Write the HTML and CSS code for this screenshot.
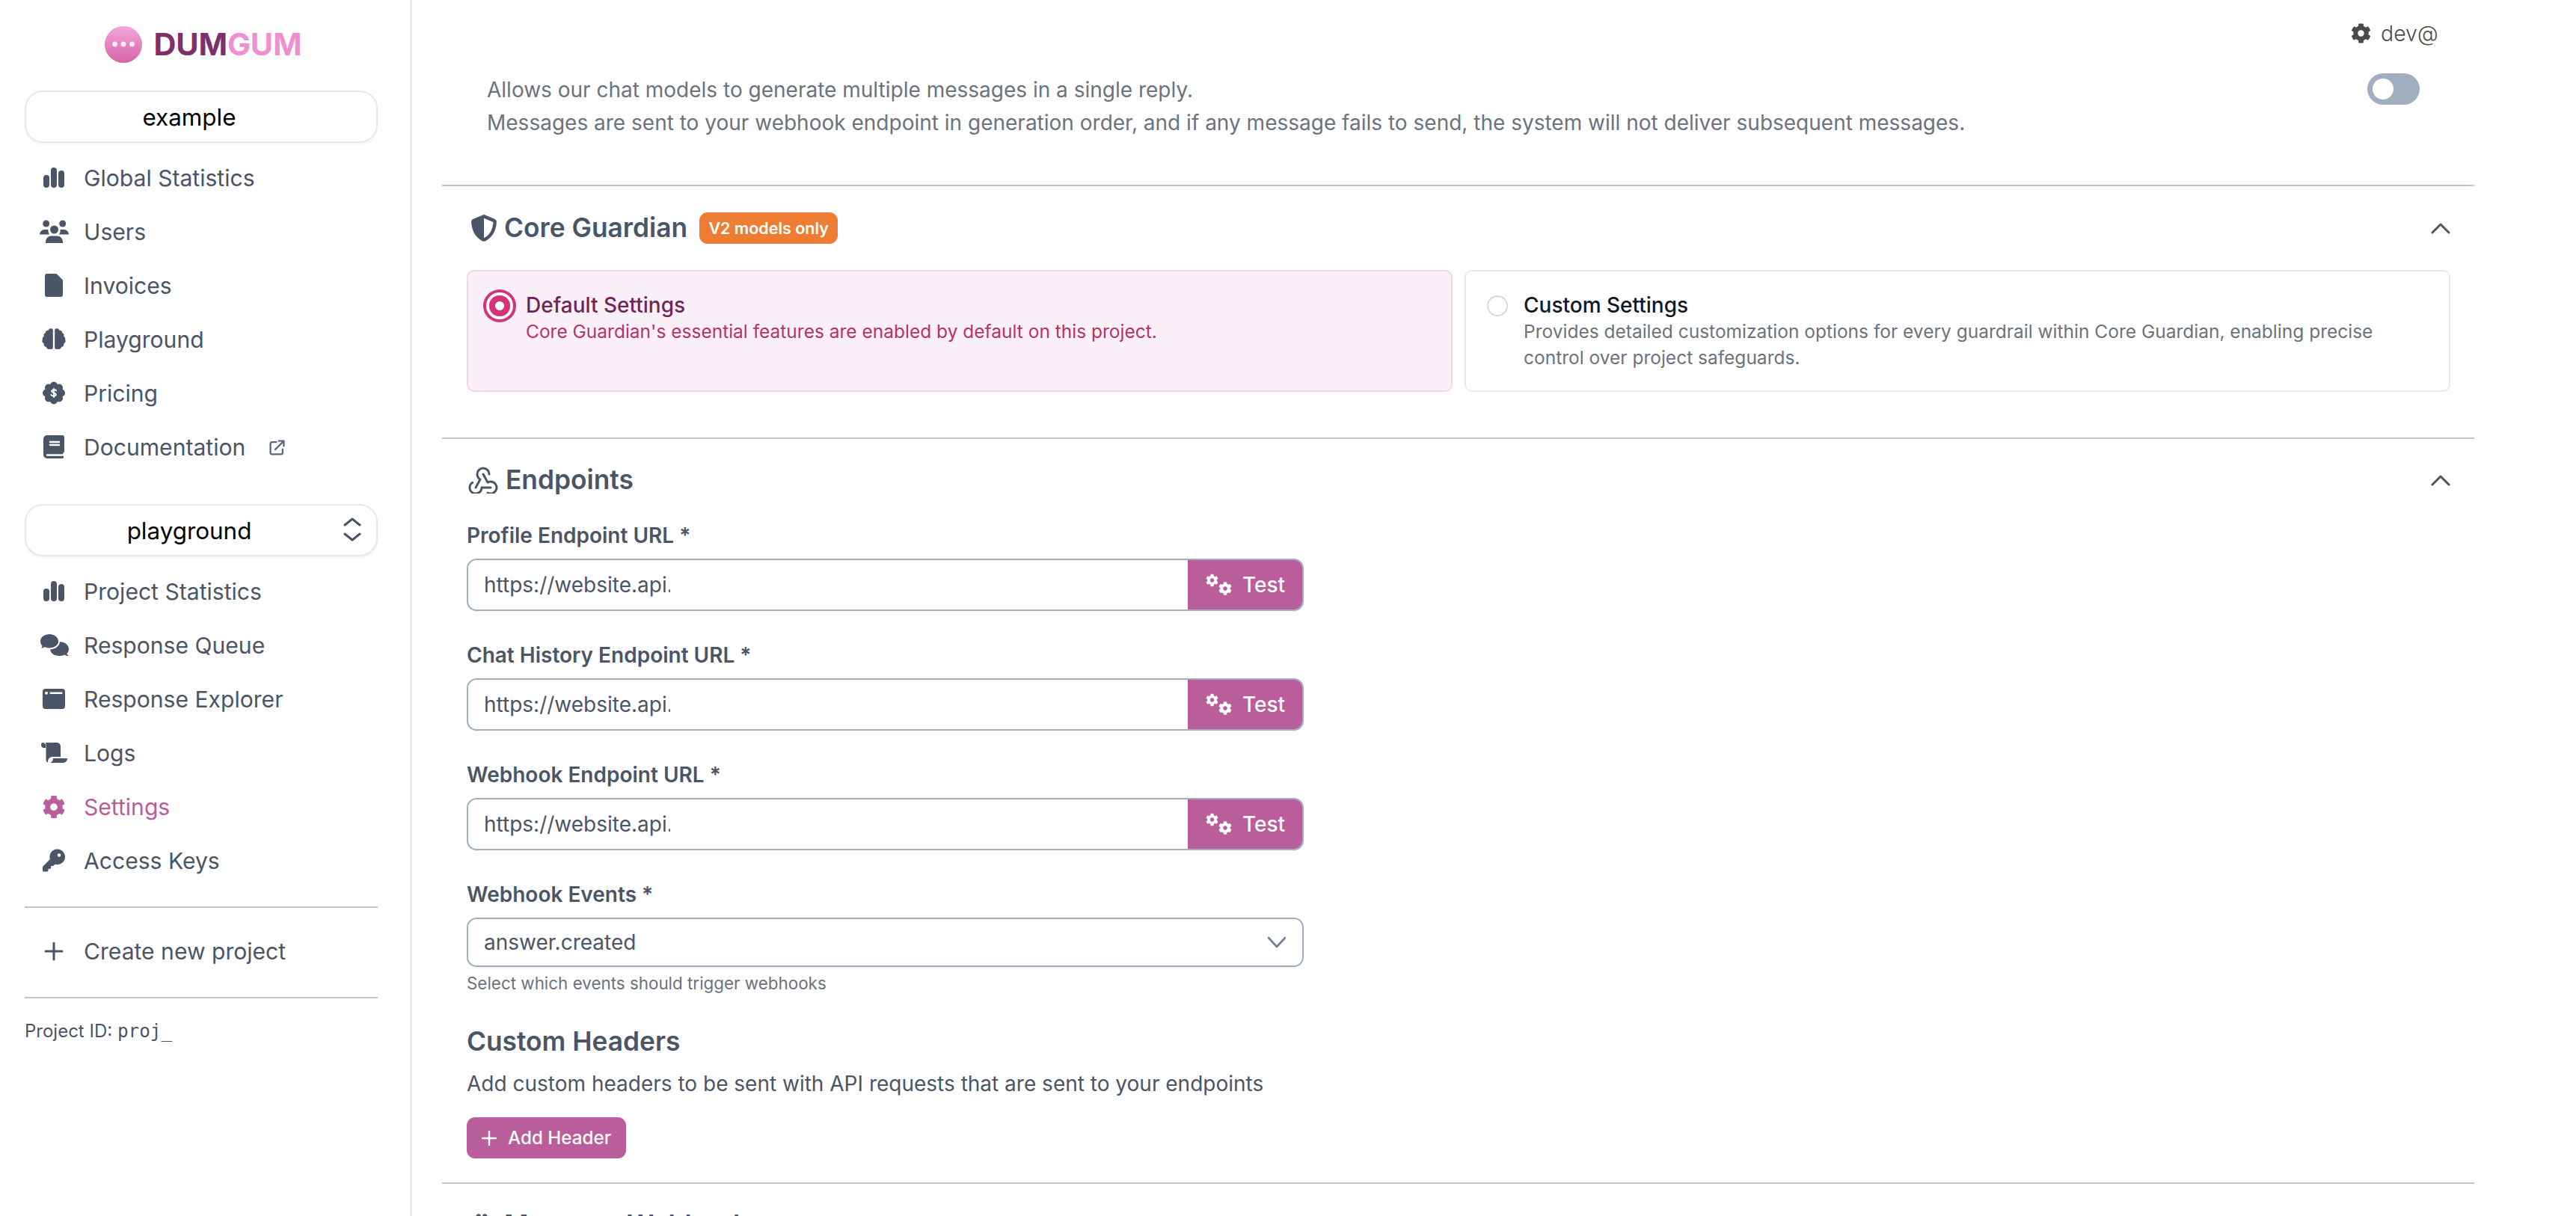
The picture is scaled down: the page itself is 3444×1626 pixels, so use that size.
FILE: index.html
```html
<!DOCTYPE html>
<html lang="en">
<head>
<meta charset="utf-8">
<title>DumGum Settings</title>
<link rel="stylesheet" href="styles.css">
</head>
<body>
<svg class="defs" width="0" height="0" aria-hidden="true">
  <symbol id="i-chart" viewBox="0 0 40 32"><rect x="6" y="12" width="8" height="17" rx="4"/><rect x="16" y="2" width="8" height="27" rx="4"/><rect x="26" y="6" width="8" height="23" rx="4"/></symbol>
  <symbol id="i-gear" viewBox="0 0 512 512"><path d="M487.4 315.7l-42.6-24.6c4.3-23.2 4.3-47 0-70.2l42.6-24.6c4.9-2.8 7.1-8.6 5.5-14-11.1-35.6-30-67.8-54.7-94.6-3.8-4.1-10-5.1-14.8-2.3L380.8 110c-17.9-15.4-38.5-27.3-60.8-35.1V25.8c0-5.6-3.9-10.5-9.4-11.7-36.7-8.2-74.3-7.8-109.2 0-5.5 1.2-9.4 6.1-9.4 11.7V75c-22.2 7.9-42.8 19.8-60.8 35.1L88.7 85.5c-4.9-2.8-11-1.9-14.8 2.3-24.7 26.7-43.6 58.9-54.7 94.6-1.7 5.4.6 11.2 5.5 14L67.3 221c-4.3 23.2-4.3 47 0 70.2l-42.6 24.6c-4.9 2.8-7.1 8.6-5.5 14 11.1 35.6 30 67.8 54.7 94.6 3.8 4.1 10 5.1 14.8 2.3l42.6-24.6c17.9 15.4 38.5 27.3 60.8 35.1v49.2c0 5.6 3.9 10.5 9.4 11.7 36.7 8.2 74.3 7.8 109.2 0 5.5-1.2 9.4-6.1 9.4-11.7v-49.2c22.2-7.9 42.8-19.8 60.8-35.1l42.6 24.6c4.9 2.8 11 1.9 14.8-2.3 24.7-26.7 43.6-58.9 54.7-94.6 1.5-5.5-.7-11.3-5.6-14.1zM256 336c-44.1 0-80-35.9-80-80s35.9-80 80-80 80 35.9 80 80-35.9 80-80 80z"/></symbol>
  <symbol id="i-gears" viewBox="0 0 36 30"><use href="#i-gear" x="1" y="0" width="17" height="18"/><use href="#i-gear" x="18" y="11" width="18" height="18"/></symbol>
  <symbol id="i-key" viewBox="0 0 512 512"><path d="M336 352c97.200 0 176-78.800 176-176S433.200 0 336 0S160 78.800 160 176c0 18.700 2.900 36.800 8.300 53.700L7 391c-4.500 4.500-7 10.600-7 17v80c0 13.300 10.700 24 24 24h80c13.300 0 24-10.700 24-24V448h40c13.300 0 24-10.700 24-24V384h40c6.400 0 12.500-2.500 17-7l33.300-33.300c16.900 5.400 35 8.300 53.700 8.300zM376 96a40 40 0 1 1 0 80 40 40 0 1 1 0-80z"/></symbol>
  <symbol id="i-up" viewBox="0 0 26 16"><path d="M2 14L13 3L24 14" fill="none" stroke="#4a5568" stroke-width="3" stroke-linecap="round" stroke-linejoin="round"/></symbol>
  <symbol id="i-brain" viewBox="0 0 40 32"><g transform="translate(0 1.800) scale(1 .9)"><path d="M18.800 3a3 3 0 0 0-6-1a4 4 0 0 0-4 4a4 4 0 0 0-2 5a5 5 0 0 0-2 5a5 5 0 0 0 2 6a4 4 0 0 0 3 5a4 4 0 0 0 5 3a3 3 0 0 0 4-2z"/><path d="M21.200 3a3 3 0 0 1 6-1a4 4 0 0 1 4 4a4 4 0 0 1 2 5a5 5 0 0 1 2 5a5 5 0 0 1-2 6a4 4 0 0 1-3 5a4 4 0 0 1-5 3a3 3 0 0 1-4-2z"/></g></symbol>
</svg>

<div class="app">
  <aside class="sidebar">
    <div class="logo">
      <svg class="logo-mark" viewBox="0 0 50 49">
        <defs><linearGradient id="logo-g" x1="0" y1="0" x2="0" y2="1"><stop offset="0" stop-color="#f3a6d8"/><stop offset="1" stop-color="#d763a8"/></linearGradient></defs>
        <ellipse cx="25" cy="24.500" rx="25" ry="24.500" fill="url(#logo-g)"/>
        <circle cx="13.500" cy="24" r="3.500" fill="#fbe6f4"/><circle cx="25" cy="24" r="3.500" fill="#fbe6f4"/><circle cx="36.500" cy="24" r="3.500" fill="#fbe6f4"/>
      </svg>
      <span class="logo-text"><span class="logo-dark">DUM</span><span class="logo-light">GUM</span></span>
    </div>

    <div class="picker">example</div>
    <nav class="nav">
      <a class="nav-item"><svg class="nav-icon"><use href="#i-chart"/></svg>Global Statistics</a>
      <a class="nav-item"><svg class="nav-icon" viewBox="0 0 40 32"><circle cx="9.700" cy="5" r="4.500"/><circle cx="31.700" cy="5" r="4.500"/><circle cx="20.500" cy="13" r="5.500"/><path d="M9 31v-2a7.500 7.500 0 0 1 7.500-7.500h8a7.500 7.500 0 0 1 7.500 7.500v2z"/><path d="M1 19.500a6.500 6.500 0 0 1 6.500-6.500h5a8 8 0 0 0 1.500 6.500z"/><path d="M40 19.500a6.500 6.500 0 0 0-6.500-6.500h-5a8 8 0 0 1-1.500 6.500z"/></svg>Users</a>
      <a class="nav-item"><svg class="nav-icon" viewBox="0 0 40 32"><path d="M11 0H23.500L32 8.500V28a3 3 0 0 1-3 3H11a3 3 0 0 1-3-3V3a3 3 0 0 1 3-3z"/></svg>Invoices</a>
      <a class="nav-item"><svg class="nav-icon"><use href="#i-brain"/></svg>Playground</a>
      <a class="nav-item"><svg class="nav-icon" viewBox="0 0 40 32"><circle cx="20" cy="15.500" r="12"/><circle cx="20" cy="5.500" r="5"/><circle cx="27" cy="8.500" r="5"/><circle cx="30" cy="15.500" r="5"/><circle cx="27" cy="22.500" r="5"/><circle cx="20" cy="25.500" r="5"/><circle cx="13" cy="22.500" r="5"/><circle cx="10" cy="15.500" r="5"/><circle cx="13" cy="8.500" r="5"/><path class="icon-cut" transform="translate(20 15.500) scale(.8) translate(-20 -15.500)" d="M24 11.500c-1-1.500-6.500-2-7.500.5c-1 3 7.500 3 7 6.500c-.5 2.500-6.500 2.500-8 0M20 8.500v14"/></svg>Pricing</a>
      <a class="nav-item"><svg class="nav-icon" viewBox="0 0 40 32"><path d="M11 0H31a3 3 0 0 1 3 3V21a3 3 0 0 1-2 3v3.500a2 2 0 0 1 1 2a1.500 1.500 0 0 1-1.500 1.500H11a5 5 0 0 1-5-5V5a5 5 0 0 1 5-5z"/><path class="icon-cut" d="M15 9H27M15 13H27M11 26.500H31"/></svg>Documentation<svg class="ext-icon" viewBox="0 0 20 20"><path d="M9 3H3.500A2 2 0 0 0 1.500 5V16.500A2 2 0 0 0 3.500 18.500H15A2 2 0 0 0 17 16.500V12M7.500 12.500L18 2M12 1.500H18.500V8"/></svg></a>
    </nav>

    <div class="picker picker-project">playground
      <svg class="picker-arrows" viewBox="0 0 24 32"><path d="M2 10L12 2L22 10M2 22L12 30L22 22"/></svg>
    </div>
    <nav class="nav">
      <a class="nav-item"><svg class="nav-icon"><use href="#i-chart"/></svg>Project Statistics</a>
      <a class="nav-item"><svg class="nav-icon" viewBox="0 0 40 32"><path d="M27 11c7 0 13 4 13 10c0 2.500-1 4.500-2.500 6c.3 1 1.200 2 2.500 3c-2.500 0-4.500-.5-6-1.500c-2 1-4.500 1.500-7 1.500c-7 0-12-4-12-9.500s5-9.500 12-9.500z"/><path class="icon-halo" d="M14 0C6.500 0 1 4.500 1 10.500c0 2.500 1 4.800 2.500 6.500C3 18.500 2 19.800 1 21c2.500 0 5-.7 7-1.800c2 .8 4 1.300 6 1.300c7.500 0 13-4.500 13-10S21.500 0 14 0z"/></svg>Response Queue</a>
      <a class="nav-item"><svg class="nav-icon" viewBox="0 0 40 32"><rect x="5" y="2" width="30" height="27" rx="4"/><circle class="icon-dot" cx="10" cy="7.700" r="2"/><rect class="icon-dot" x="14.500" y="6.500" width="17" height="2.400" rx="1.200"/></svg>Response Explorer</a>
      <a class="nav-item"><svg class="nav-icon" viewBox="0 0 40 32"><path d="M5 2a2.500 2.500 0 0 0-2 2.500c0 3 1.500 4.500 3.500 4.500H9V5.500C9 3.500 7.500 2 5 2z"/><path d="M9 2H24a5 5 0 0 1 5 5V21H18a6 6 0 0 0-6 6v1.500c-2-.5-2.500-2-2.500-4.500V6c0-1.500-.2-3-.5-4z"/><path d="M19 23H38c0 3.500-2.500 6-6 6H15c2.500-1 4-3 4-6z"/></svg>Logs</a>
      <a class="nav-item nav-item-active"><svg class="nav-icon" viewBox="0 0 40 32"><use href="#i-gear" x="4.500" y="0.500" width="31" height="31"/></svg>Settings</a>
      <a class="nav-item"><svg class="nav-icon" viewBox="0 0 40 32"><use href="#i-key" x="5" y="0" width="30" height="31"/></svg>Access Keys</a>
    </nav>

    <hr class="side-rule side-rule-first">
    <a class="nav-item nav-item-create"><svg class="nav-icon plus-icon" viewBox="0 0 40 32"><path d="M20 5V27M9 16H31"/></svg>Create new project</a>
    <hr class="side-rule">
    <p class="project-id">Project ID: <code class="project-code">proj_</code></p>
  </aside>

  <main class="main">
    <div class="user-menu">
      <svg class="user-gear"><use href="#i-gear"/></svg>
      <span class="user-name">dev@example.com</span>
    </div>

    <div class="intro">
      <p class="intro-text">Allows our chat models to generate multiple messages in a single reply.<br>Messages are sent to your webhook endpoint in generation order, and if any message fails to send, the system will not deliver subsequent messages.</p>
      <span class="toggle"><span class="toggle-knob"></span></span>
    </div>

    <section class="section section-guardian">
      <header class="section-head">
        <svg class="section-icon shield-icon" viewBox="0 0 512 512"><path d="M256 0c4.600 0 9.200 1 13.400 2.900L457.700 82.800c22 9.300 38.400 31 38.300 57.200c-.5 99.200-41.300 280.700-213.600 363.200c-16.700 8-36.100 8-52.800 0C57.300 420.700 16.500 239.200 16 140c-.1-26.200 16.300-47.900 38.300-57.200L242.700 2.900C246.800 1 251.400 0 256 0zm0 66.800V444.800C394 378 431.100 230.100 432 141.400L256 66.800l0 0z"/></svg>
        <h2 class="section-title">Core Guardian</h2>
        <span class="badge">V2 models only</span>
        <svg class="collapse"><use href="#i-up"/></svg>
      </header>
      <div class="cards">
        <div class="card card-on">
          <span class="radio radio-on"></span>
          <div class="card-body">
            <div class="card-title">Default Settings</div>
            <div class="card-text">Core Guardian's essential features are enabled by default on this project.</div>
          </div>
        </div>
        <div class="card">
          <span class="radio"></span>
          <div class="card-body">
            <div class="card-title">Custom Settings</div>
            <div class="card-text">Provides detailed customization options for every guardrail within Core Guardian, enabling precise control over project safeguards.</div>
          </div>
        </div>
      </div>
    </section>

    <section class="section">
      <header class="section-head">
        <svg class="section-icon webhook-icon" viewBox="2 3 20 18"><path d="M4.876 13.610a4 4 0 1 0 6.124 3.390h6"/><path d="M15.066 20.502a4 4 0 1 0 1.934-7.502c-.706 0-1.424.179-2 .5l-3-5.500"/><path d="M16 8a4 4 0 1 0-8 0c0 1.506.77 2.818 2 3.500l-3 5.500"/></svg>
        <h2 class="section-title">Endpoints</h2>
        <svg class="collapse"><use href="#i-up"/></svg>
      </header>

      <div class="form">
        <label class="field-label field-label-first">Profile Endpoint URL *</label>
        <div class="url-row">
          <div class="url-value"><span class="url-clip">https://website.api.example.com</span></div>
          <span class="test-btn"><svg class="gears"><use href="#i-gears"/></svg>Test</span>
        </div>
        <label class="field-label">Chat History Endpoint URL *</label>
        <div class="url-row">
          <div class="url-value"><span class="url-clip">https://website.api.example.com</span></div>
          <span class="test-btn"><svg class="gears"><use href="#i-gears"/></svg>Test</span>
        </div>
        <label class="field-label">Webhook Endpoint URL *</label>
        <div class="url-row">
          <div class="url-value"><span class="url-clip">https://website.api.example.com</span></div>
          <span class="test-btn"><svg class="gears"><use href="#i-gears"/></svg>Test</span>
        </div>
        <label class="field-label">Webhook Events *</label>
        <div class="event-select">answer.created
          <svg class="event-chevron" viewBox="0 0 26 16"><path d="M2 2L13 14L24 2"/></svg>
        </div>
        <p class="helper">Select which events should trigger webhooks</p>
        <h3 class="sub-title">Custom Headers</h3>
        <p class="sub-text">Add custom headers to be sent with API requests that are sent to your endpoints</p>
        <span class="add-btn"><svg class="add-plus" viewBox="0 0 20 20"><path d="M10 1V19M1 10H19"/></svg>Add Header</span>
      </div>
    </section>

    <section class="section">
      <header class="section-head">
        <svg class="section-icon"><use href="#i-brain"/></svg>
        <h2 class="section-title">Message Webhook</h2>
      </header>
    </section>
  </main>
</div>
</body>
</html>
```
FILE: styles.css
```css
* { box-sizing: border-box; }
html, body { margin: 0; height: 1626px; overflow: hidden; background: #fff; }
body { font-family: Inter, "Noto Sans", sans-serif; font-size: 28px; color: #4a5568; }
.defs { position: absolute; }
p, h2, h3 { margin: 0; }

.app { display: flex; height: 1626px; }

/* Sidebar */
.sidebar { flex: 0 0 551px; height: 1626px; padding: 35px 43px 0 33px; border-right: 3px solid #e9e9ee; }
.logo { display: flex; align-items: center; justify-content: center; gap: 15px; height: 49px; padding-left: 6px; margin-bottom: 37px; }
.logo-mark { width: 50px; height: 49px; }
.logo-text { font-size: 41.500px; font-weight: 700; letter-spacing: -0.2px; line-height: 49px; }
.logo-dark { color: #7f2f69; }
.logo-light { color: #f08fd0; }

.picker { position: relative; display: flex; align-items: center; justify-content: center; height: 70px; padding: 2px 32px 0 0; border: 2px solid #e7e8ea; border-radius: 24px; color: #000; font-size: 31.400px; box-shadow: 0 2px 3px rgba(0, 0, 0, .05); }
.picker-project { margin-top: 40px; }
.picker-arrows { position: absolute; right: 20px; top: 50%; width: 24px; height: 32px; margin-top: -17px; fill: none; stroke: #4a5568; stroke-width: 3; stroke-linecap: round; stroke-linejoin: round; }

.nav { margin-top: 11px; }
.nav-item { display: flex; align-items: center; height: 72px; padding-left: 19px; gap: 20px; color: #4a5568; font-size: 30.100px; white-space: nowrap; }
.nav-item-active { color: #b95e9a; }
.nav-item-create { margin: 22px 0 25px; }
.nav-icon { flex: none; width: 40px; height: 32px; fill: currentColor; }
.plus-icon { fill: none; stroke: currentColor; stroke-width: 3; stroke-linecap: round; }
.icon-cut { fill: none; stroke: #fff; stroke-width: 2.400; stroke-linecap: round; }
.icon-halo { stroke: #fff; stroke-width: 2; }
.icon-dot { fill: #fff; }
.ext-icon { width: 21px; height: 21px; margin-left: 12px; fill: none; stroke: #5b6880; stroke-width: 2.200; stroke-linecap: round; stroke-linejoin: round; }

.side-rule { height: 2px; margin: 0; border: 0; background: #bcc6d6; }
.side-rule-first { margin-top: 25px; }
.project-id { margin-top: 29px; font-size: 24px; line-height: 30px; color: #4a5568; }
.project-code { font-family: "DejaVu Sans Mono", "Liberation Mono", monospace; font-size: 24.300px; }

/* Main */
.main { position: relative; flex: 0 0 2757px; height: 1626px; padding: 0 0 0 40px; overflow: hidden; }
.user-menu { position: absolute; top: 30px; right: 48px; display: flex; align-items: center; gap: 13px; height: 29px; color: #4b4b4b; font-size: 28.500px; }
.user-gear { width: 27px; height: 29px; fill: #4b4b4b; }
.user-name { display: block; width: 77px; overflow: hidden; white-space: nowrap; font-weight: 300; line-height: 36px; }

.intro { display: flex; justify-content: space-between; align-items: flex-start; width: 2717px; height: 247px; padding: 98px 73px 0 60px; }
.intro-text { line-height: 44px; color: #6b7280; }
.toggle { display: block; width: 70px; height: 42px; padding: 7px; background: #a0aec0; border-radius: 21px; }
.toggle-knob { display: block; width: 28px; height: 28px; background: #fff; border-radius: 50%; }

.section { width: 2717px; padding: 34px 32px 32px 33px; border-top: 2px solid #bcc6d6; }
.section-guardian { padding-top: 35px; padding-bottom: 61px; }
.section-head { display: flex; align-items: center; height: 42px; color: #4a5568; }
.section-icon { flex: none; width: 40px; height: 36px; margin-right: 10px; fill: #4a5568; }
.shield-icon { width: 36px; margin: 0 9px 0 5px; }
.webhook-icon { fill: none; stroke: #4a5568; stroke-width: 1.500; stroke-linecap: round; stroke-linejoin: round; margin-left: 2px; margin-right: 10px; }
.section-title { font-size: 35.300px; font-weight: 600; line-height: 42px; }
.badge { display: inline-flex; align-items: center; justify-content: center; width: 185px; height: 42px; margin-left: 16px; background: #ec7d33; border-radius: 11px; color: #fff; font-size: 21.500px; font-weight: 600; white-space: nowrap; }
.collapse { width: 26px; height: 16px; margin-left: auto; }

.cards { display: grid; grid-template-columns: 1318px 1318px; gap: 16px; margin-top: 35px; }
.card { display: flex; gap: 21px; height: 163px; padding: 28px 28px 0; border: 2px solid #e9e9ec; border-radius: 10px; }
.card-on { background: #fbf0f7; border-color: #f5d5e7; }
.radio { flex: none; width: 28px; height: 28px; margin-top: 4px; border: 2px solid #d8dae2; border-radius: 50%; }
.radio-on { border: 0; background: radial-gradient(circle, #fff 0 5.500px, #d53078 6.500px); box-shadow: 0 0 0 4px #fff, 0 0 0 8px #d53078; }
.card-title { font-weight: 500; line-height: 35px; color: #111827; }
.card-on .card-title { color: #702459; }
.card-text { font-size: 24.500px; line-height: 35px; color: #6b7280; }
.card-on .card-text { color: #b83268; }

.form { width: 1119px; }
.field-label { display: block; margin-top: 39px; font-weight: 600; line-height: 40px; color: #4a5568; }
.field-label-first { margin-top: 33px; }
.url-row { display: flex; height: 70px; margin-top: 11px; border: 2.500px solid #a0aec0; border-radius: 13px; overflow: hidden; box-shadow: 0 2px 3px rgba(0, 0, 0, .04); }
.url-value { flex: 1; display: flex; align-items: center; padding-left: 21px; }
.url-clip { display: block; width: 249px; overflow: hidden; white-space: nowrap; line-height: 40px; }
.test-btn { display: flex; align-items: center; gap: 14px; flex: 0 0 153px; padding-left: 23px; background: #b95e9a; color: #fff; font-weight: 500; }
.gears { width: 36px; height: 30px; fill: #fff; }
.event-select { position: relative; display: flex; align-items: center; height: 66px; margin-top: 11px; padding-left: 21px; border: 2.500px solid #a0aec0; border-radius: 13px; box-shadow: 0 2px 3px rgba(0, 0, 0, .04); }
.event-chevron { position: absolute; right: 21px; top: 50%; width: 26px; height: 16px; margin-top: -8px; fill: none; stroke: #718096; stroke-width: 2.600; stroke-linecap: round; stroke-linejoin: round; }
.helper { margin-top: 7px; font-size: 22.400px; line-height: 30px; color: #6b7280; }
.sub-title { margin-top: 41px; font-size: 35.300px; font-weight: 600; line-height: 44px; color: #4a5568; }
.sub-text { margin-top: 12px; line-height: 44px; white-space: nowrap; color: #4a5568; }
.add-btn { display: flex; align-items: center; gap: 15px; width: 213px; height: 55px; margin-top: 23px; padding-left: 20px; background: #b95e9a; border-radius: 11px; color: #fff; font-size: 24.200px; font-weight: 500; white-space: nowrap; }
.add-plus { flex: none; width: 20px; height: 20px; fill: none; stroke: #fff; stroke-width: 2.400; stroke-linecap: round; }
```
